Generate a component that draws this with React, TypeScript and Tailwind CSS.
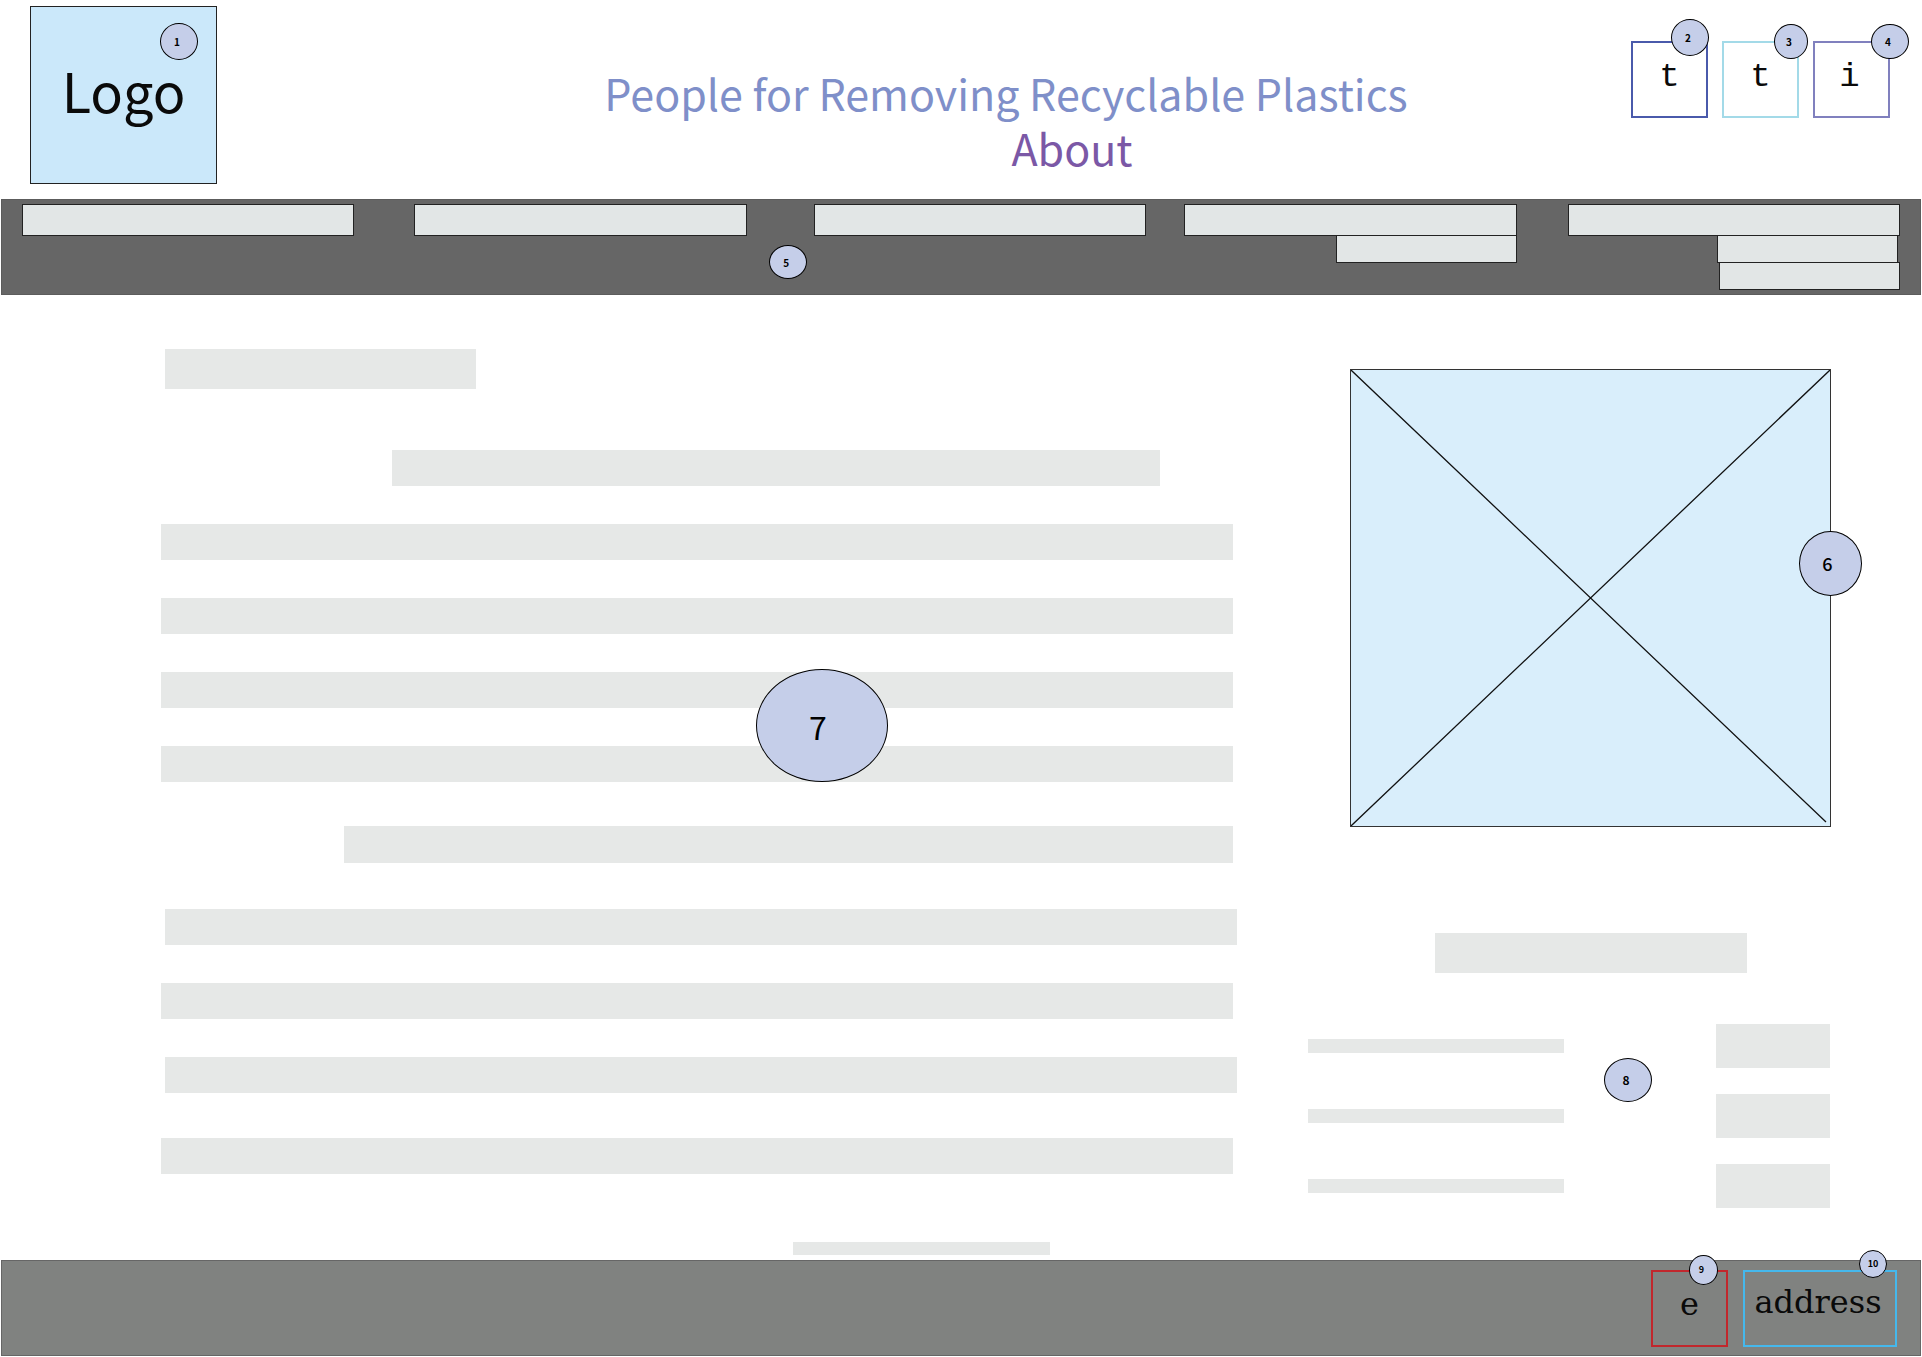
import type { ReactNode } from "react";

const sans = "font-['Noto_Sans_CJK_SC','Noto_Sans',sans-serif]";

function Badge({ n, className }: { n: number; className: string }) {
  return (
    <span
      className={`absolute z-10 flex items-center justify-center rounded-[50%] border border-black bg-[#c5cee9] text-black ${className}`}
    >
      {n}
    </span>
  );
}

function Bar({ className }: { className: string }) {
  return <div className={`bg-[#e6e8e7] ${className}`} />;
}

function BoxLink({
  label,
  box,
  children,
}: {
  label: string;
  box: string;
  children?: ReactNode;
}) {
  return (
    <div className="relative">
      <a href="#" className={`flex h-[77px] justify-center border-2 text-[#0a0a0a] ${box}`}>
        {label}
      </a>
      {children}
    </div>
  );
}

function NavItem({ name, children }: { name: string; children?: ReactNode }) {
  return (
    <li className="flex flex-col items-end">
      <a
        href="#"
        aria-label={name}
        className="block h-8 w-full border border-[#222] bg-[#e2e6e6]"
      />
      {children}
    </li>
  );
}

function SubItem({ name, className }: { name: string; className: string }) {
  return (
    <a
      href="#"
      aria-label={name}
      className={`-mt-px block h-7 w-[181px] border border-[#222] bg-[#e2e6e6] ${className}`}
    />
  );
}

const paragraphs = [
  "ml-1 mr-[761px] h-10",
  "mt-[61px] ml-[231px] mr-[77px] h-9",
  "mt-[38px] mr-1 h-9",
  "mt-[38px] mr-1 h-9",
  "mt-[38px] mr-1 h-9",
  "mt-[38px] mr-1 h-9",
  "mt-11 ml-[183px] mr-1 h-[37px]",
  "mt-[46px] ml-1 h-9",
  "mt-[38px] mr-1 h-9",
  "mt-[38px] ml-1 h-9",
  "mt-[45px] mr-1 h-9",
];

export default function App() {
  return (
    <div className={`min-h-screen bg-white ${sans}`}>
      <header className="flex h-[199px] items-start pl-[30px] pr-8">
        <div className="relative mt-1.5 flex h-[178px] w-[187px] shrink-0 items-center justify-center border border-[#222] bg-[#cbe8fa] pb-2.5">
          <span className="text-[54px] leading-[60px] text-[#0a0a0a]">Logo</span>
          <Badge n={1} className="left-[129px] top-4 h-[37px] w-[38px] pr-1 text-[10px] font-bold" />
        </div>
        <div className="flex flex-1 flex-col items-center pl-[164px] pt-[65px] text-[43px] leading-[55px]">
          <h1 className="whitespace-nowrap text-[#7f8fc9]">People for Removing Recyclable Plastics</h1>
          <h2 className="ml-[132px] text-[#7b58a6]">About</h2>
        </div>
        <div className="flex shrink-0 gap-3.5 pt-[41px] font-['Liberation_Mono',monospace] text-[34px] leading-9">
          <BoxLink label="t" box="w-[77px] border-[#4a5aab] pt-4">
            <Badge n={2} className={`-top-[22px] left-10 h-[37px] w-[38px] pr-1 text-[10px] font-bold ${sans}`} />
          </BoxLink>
          <BoxLink label="t" box="w-[77px] border-[#a3dae8] pt-4">
            <Badge n={3} className={`-top-[17px] left-[52px] h-[35px] w-[34px] pr-1 text-[10px] font-bold ${sans}`} />
          </BoxLink>
          <BoxLink label="i" box="w-[77px] border-[#8080be] pt-4 pr-1">
            <Badge n={4} className={`-top-[17px] left-[58px] h-[35px] w-[38px] pr-1 text-[10px] font-bold ${sans}`} />
          </BoxLink>
        </div>
      </header>

      <nav className="relative mx-px h-24 border border-[#5c5c5c] bg-[#666]">
        <ul className="grid grid-cols-[333fr_60fr_333fr_67fr_333fr_38fr_333fr_51fr_333fr] px-5 pt-1">
          <NavItem name="Section one" />
          <li aria-hidden="true" />
          <NavItem name="Section two" />
          <li aria-hidden="true" />
          <NavItem name="Section three" />
          <li aria-hidden="true" />
          <NavItem name="Section four">
            <SubItem name="Section four, page one" className="" />
          </NavItem>
          <li aria-hidden="true" />
          <NavItem name="Section five">
            <SubItem name="Section five, page one" className="mr-0.5" />
            <SubItem name="Section five, page two" className="" />
          </NavItem>
        </ul>
        <Badge n={5} className="left-[40%] top-[45px] h-[34px] w-[38px] pr-1 text-[10px] font-bold" />
      </nav>

      <main className="grid grid-cols-[1076fr_524fr] gap-x-[70px] pl-[161px] pr-[91px] pt-[54px]">
        <section className="relative flex flex-col">
          {paragraphs.map((p, i) => (
            <Bar key={i} className={p} />
          ))}
          <Badge
            n={7}
            className="left-[595px] top-[320px] h-[113px] w-[132px] pr-2 text-[32px]"
          />
        </section>

        <aside className="pt-5">
          <div className="relative ml-[43px] h-[458px] border border-[#333] bg-[#d9eefb]">
            <svg
              className="block h-full w-full"
              viewBox="0 0 479 456"
              preserveAspectRatio="none"
              fill="none"
              stroke="#111"
              strokeWidth="1.3"
              aria-hidden="true"
            >
              <path d="M0 0L475 452M479 0L0 456" />
            </svg>
            <Badge n={6} className="-right-8 top-[161px] h-[65px] w-[63px] pr-1.5 text-[18px] font-medium" />
          </div>
          <Bar className="ml-[128px] mr-[84px] mt-[106px] h-10" />
          <div className="relative mt-[51px] flex flex-col gap-[26px]">
            {[0, 1, 2].map((r) => (
              <div key={r} className="flex items-center justify-between pl-px pr-px">
                <Bar className="h-3.5 w-64" />
                <Bar className="h-11 w-[114px]" />
              </div>
            ))}
            <Badge n={8} className="left-[297px] top-[34px] h-11 w-12 pr-1 text-[12px] font-bold" />
          </div>
        </aside>
      </main>

      <div className="flex justify-center pb-[5px] pr-[79px] pt-[34px]">
        <Bar className="h-[13px] w-[257px]" />
      </div>

      <footer className="mx-px flex h-24 justify-end gap-[15px] border border-[#666] bg-[#808280] pr-[23px] pt-[9px] font-['DejaVu_Serif',serif] text-[32px] leading-10">
        <BoxLink label="e" box="w-[77px] border-[#c1272d] pt-3">
          <Badge n={9} className={`-top-[15px] left-[38px] h-[30px] w-[29px] pr-1 text-[9px] font-bold ${sans}`} />
        </BoxLink>
        <BoxLink label="address" box="w-[154px] border-[#45b8ec] pt-2.5 pr-1">
          <Badge n={10} className={`-top-5 left-[116px] h-7 w-7 text-[9px] font-bold ${sans}`} />
        </BoxLink>
      </footer>
    </div>
  );
}
